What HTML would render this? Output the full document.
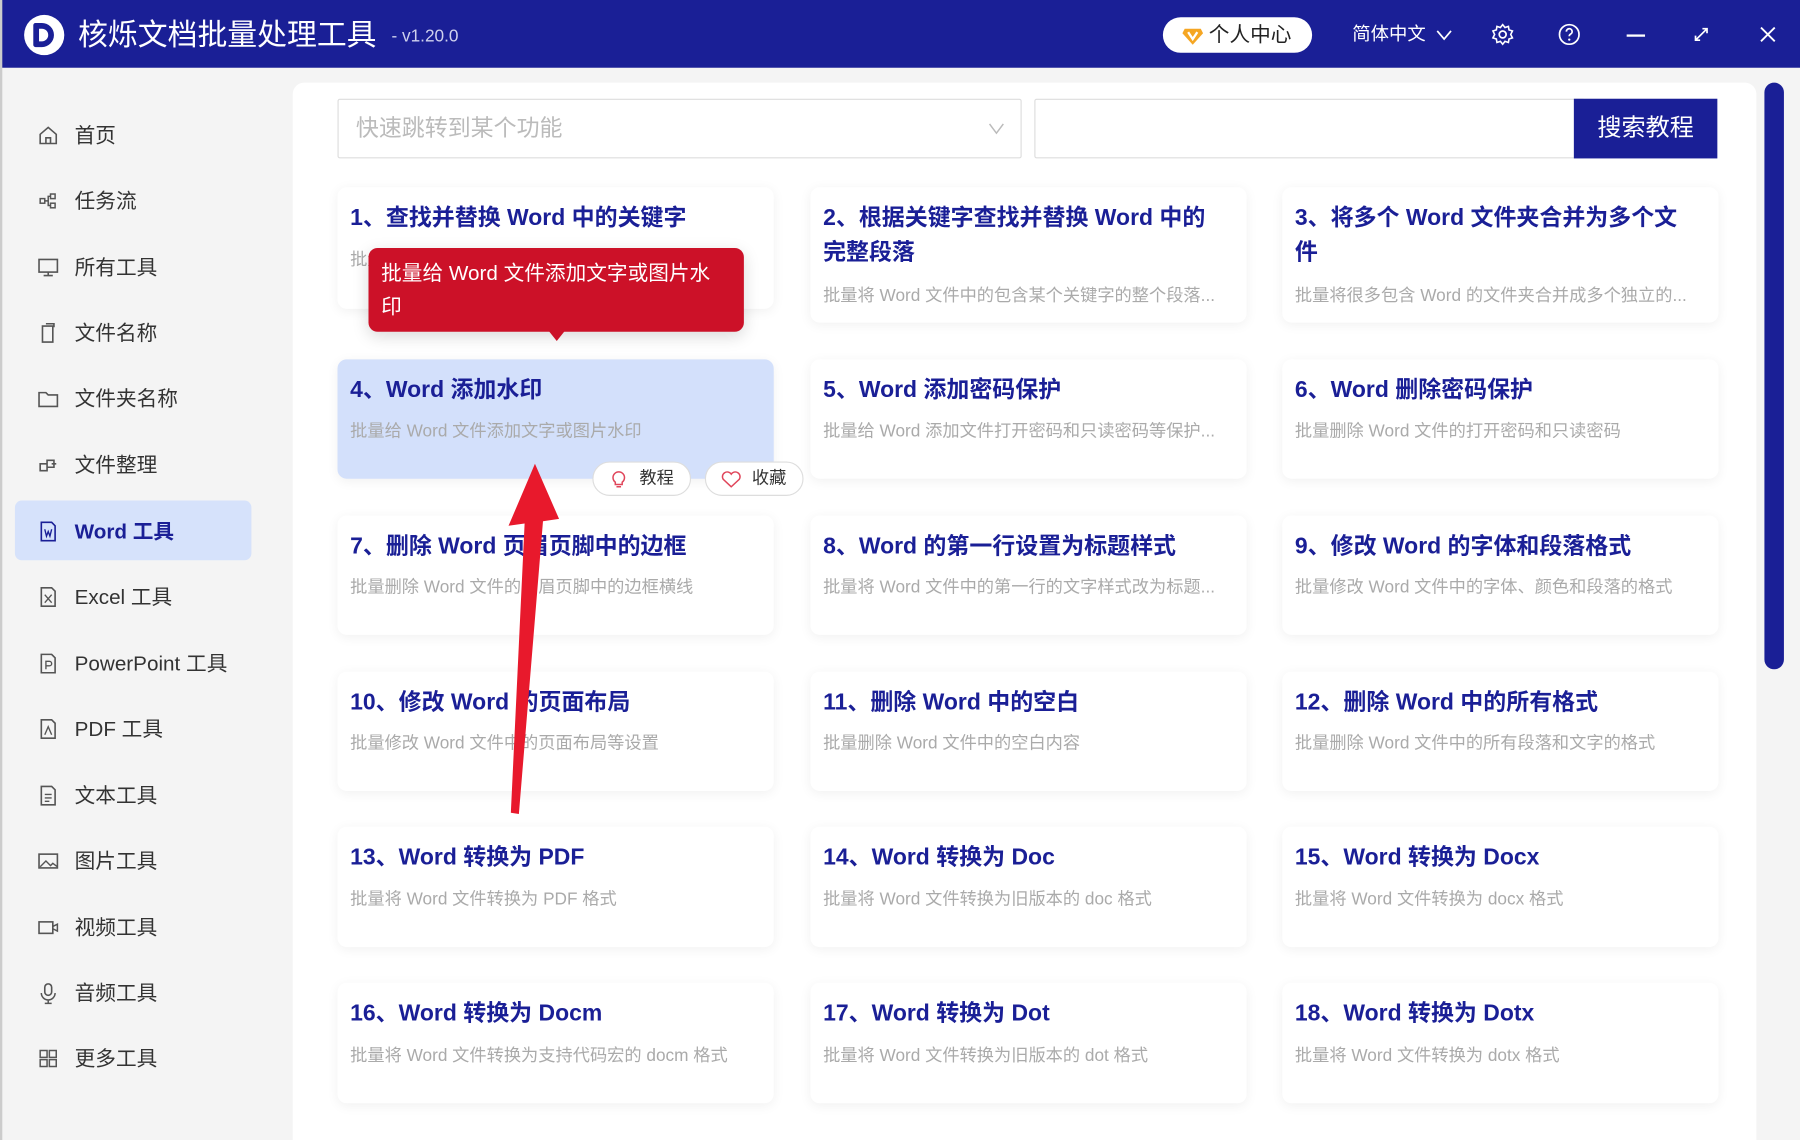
<!DOCTYPE html>
<html><head><meta charset="utf-8">
<style>
*{margin:0;padding:0;box-sizing:border-box}
html,body{width:1800px;height:1140px;overflow:hidden;background:#f4f4f4}
#w{position:absolute;left:0;top:0;width:1568px;height:993px;transform:scale(1.14796,1.14804);transform-origin:0 0;font-family:"Liberation Sans","Noto Sans CJK SC",sans-serif;background:#f4f4f4}
.a{position:absolute;white-space:nowrap}
#hd{left:0;top:0;width:1568px;height:59px;background:#1a1f96}
.si{position:absolute;left:32px;width:20px;height:20px}
.st{position:absolute;left:65px;font-size:18px;color:#333;line-height:24px}
.card{position:absolute;width:380px;background:#fff;border-radius:8px;box-shadow:0 2px 10px rgba(0,0,0,.06)}
.ct{position:absolute;left:11px;top:12px;width:345px;font-size:20px;font-weight:bold;color:#1a1f96;line-height:30px;white-space:normal}
.cd{position:absolute;left:11px;font-size:15px;color:#aaa;white-space:nowrap;line-height:20px}
</style></head><body>
<div id="w">
<div class="a" id="hd"></div>
<div class="a" style="left:0;top:0;width:2px;height:993px;background:#ccc"></div>
<div class="a" style="left:21px;top:13px;width:35px;height:35px;border-radius:50%;background:#fff"></div>
<div class="a" style="left:29px;top:20px;width:18px;height:21px;border:5px solid #1a1f96;border-radius:2px 11px 11px 2px"></div>
<div class="a" style="left:68px;top:13px;font-size:26px;color:#fff;line-height:34px">核烁文档批量处理工具</div>
<div class="a" style="left:341px;top:22px;font-size:15px;color:#cfd1ee;line-height:20px">- v1.20.0</div>
<div class="a" style="left:1013px;top:15px;width:130px;height:31px;border-radius:16px;background:#fff"></div>
<svg class="a" style="left:1029px;top:21px" width="20" height="20" viewBox="0 0 20 20"><path d="M3 4h14l2 4-9 10-9-10z" fill="#f5a623"/><path d="M6 7l4 6 4-6" stroke="#fff" stroke-width="2" fill="none"/></svg>
<div class="a" style="left:1053px;top:18px;font-size:18px;color:#222;line-height:24px">个人中心</div>
<div class="a" style="left:1178px;top:20px;font-size:16px;color:#fff;line-height:22px">简体中文</div>
<svg class="a" style="left:1251px;top:24px" width="14" height="14"><path d="M1 3l6 7 6-7" stroke="#fff" stroke-width="1.5" fill="none"/></svg>
<svg class="a" style="left:1299px;top:20px" width="20" height="20" viewBox="0 0 20 20"><circle cx="10" cy="10" r="3" stroke="#fff" stroke-width="1.5" fill="none"/><path d="M10 1.5l2 2.5 3-1 .5 3 3 1-1.5 3 1.5 3-3 1-.5 3-3-1-2 2.5-2-2.5-3 1-.5-3-3-1 1.5-3-1.5-3 3-1 .5-3 3 1z" stroke="#fff" stroke-width="1.4" fill="none"/></svg>
<svg class="a" style="left:1357px;top:20px" width="20" height="20" viewBox="0 0 20 20"><circle cx="10" cy="10" r="8.5" stroke="#fff" stroke-width="1.5" fill="none"/><path d="M7.5 7.5a2.5 2.5 0 1 1 3.5 2.3c-.8.4-1 1-1 1.8" stroke="#fff" stroke-width="1.5" fill="none"/><circle cx="10" cy="14.5" r="1" fill="#fff"/></svg>
<div class="a" style="left:1417px;top:30px;width:16px;height:2px;background:#fff"></div>
<svg class="a" style="left:1474px;top:22px" width="16" height="16"><path d="M3 13L13 3M9 3h4v4M3 9v4h4" stroke="#fff" stroke-width="1.5" fill="none"/></svg>
<svg class="a" style="left:1532px;top:22px" width="16" height="16"><path d="M2 2l12 12M14 2L2 14" stroke="#fff" stroke-width="1.6"/></svg>

<div class="a" style="left:13px;top:436px;width:206px;height:52px;border-radius:6px;background:#d6e2fb"></div>
<div class="a" style="left:0;top:0">
<svg class="si" style="top:108px" viewBox="0 0 20 20"><path d="M3 9l7-6 7 6v8H3zM8 17v-5h4v5" stroke="#555" stroke-width="1.4" fill="none"/></svg><div class="st" style="top:106px">首页</div>
<svg class="si" style="top:165px" viewBox="0 0 20 20"><rect x="3" y="8" width="4" height="4" stroke="#555" fill="none" stroke-width="1.3"/><rect x="12" y="4" width="4" height="4" stroke="#555" fill="none" stroke-width="1.3"/><rect x="12" y="12" width="4" height="4" stroke="#555" fill="none" stroke-width="1.3"/><path d="M7 10h3V6h2M10 10v4h2" stroke="#555" fill="none" stroke-width="1.3"/></svg><div class="st" style="top:163px">任务流</div>
<svg class="si" style="top:223px" viewBox="0 0 20 20"><rect x="2" y="3" width="16" height="11" stroke="#555" fill="none" stroke-width="1.4"/><path d="M10 14v3M6 17h8" stroke="#555" stroke-width="1.4"/></svg><div class="st" style="top:221px">所有工具</div>
<svg class="si" style="top:280px" viewBox="0 0 20 20"><path d="M5 4h9v14H5zM8 2h7v3" stroke="#555" fill="none" stroke-width="1.4"/></svg><div class="st" style="top:278px">文件名称</div>
<svg class="si" style="top:337px" viewBox="0 0 20 20"><path d="M2 5h6l2 2h8v10H2z" stroke="#555" fill="none" stroke-width="1.4"/></svg><div class="st" style="top:335px">文件夹名称</div>
<svg class="si" style="top:395px" viewBox="0 0 20 20"><path d="M3 9h6v6H3zM9 6h6v6H9zM13 9h4" stroke="#555" fill="none" stroke-width="1.4"/></svg><div class="st" style="top:393px">文件整理</div>
<svg class="si" style="top:453px" viewBox="0 0 20 20"><path d="M4 2h9l3 3v13H4z" stroke="#1a1f96" fill="none" stroke-width="1.4"/><path d="M7 8l1.5 6 1.5-4 1.5 4L13 8" stroke="#1a1f96" fill="none" stroke-width="1.2"/></svg><div class="st" style="top:451px;color:#1a1f96;font-weight:bold">Word 工具</div>
<svg class="si" style="top:510px" viewBox="0 0 20 20"><path d="M4 2h9l3 3v13H4z" stroke="#555" fill="none" stroke-width="1.4"/><path d="M7 8l6 7M13 8l-6 7" stroke="#555" stroke-width="1.2"/></svg><div class="st" style="top:508px">Excel 工具</div>
<svg class="si" style="top:568px" viewBox="0 0 20 20"><path d="M4 2h9l3 3v13H4z" stroke="#555" fill="none" stroke-width="1.4"/><path d="M8 15V8h3a2 2 0 0 1 0 4H8" stroke="#555" fill="none" stroke-width="1.2"/></svg><div class="st" style="top:566px">PowerPoint 工具</div>
<svg class="si" style="top:625px" viewBox="0 0 20 20"><path d="M4 2h9l3 3v13H4z" stroke="#555" fill="none" stroke-width="1.4"/><path d="M7 15l3-7 3 7" stroke="#555" fill="none" stroke-width="1.2"/></svg><div class="st" style="top:623px">PDF 工具</div>
<svg class="si" style="top:683px" viewBox="0 0 20 20"><path d="M4 2h9l3 3v13H4z" stroke="#555" fill="none" stroke-width="1.4"/><path d="M7 9h6M7 12h6M7 15h4" stroke="#555" stroke-width="1.2"/></svg><div class="st" style="top:681px">文本工具</div>
<svg class="si" style="top:740px" viewBox="0 0 20 20"><rect x="2" y="4" width="16" height="12" stroke="#555" fill="none" stroke-width="1.4"/><path d="M3 15l5-5 4 4 2-2 4 3" stroke="#555" fill="none" stroke-width="1.2"/></svg><div class="st" style="top:738px">图片工具</div>
<svg class="si" style="top:798px" viewBox="0 0 20 20"><rect x="2" y="5" width="12" height="10" stroke="#555" fill="none" stroke-width="1.4"/><path d="M14 9l4-2v6l-4-2" stroke="#555" fill="none" stroke-width="1.3"/></svg><div class="st" style="top:796px">视频工具</div>
<svg class="si" style="top:855px" viewBox="0 0 20 20"><rect x="7" y="2" width="6" height="10" rx="3" stroke="#555" fill="none" stroke-width="1.4"/><path d="M4 10a6 6 0 0 0 12 0M10 16v3M7 19h6" stroke="#555" fill="none" stroke-width="1.3"/></svg><div class="st" style="top:853px">音频工具</div>
<svg class="si" style="top:912px" viewBox="0 0 20 20"><path d="M3 3h6v6H3zM11 3h6v6h-6zM3 11h6v6H3zM11 11h6v6h-6z" stroke="#555" fill="none" stroke-width="1.3"/></svg><div class="st" style="top:910px">更多工具</div>
</div>

<div class="a" style="left:255px;top:72px;width:1275px;height:921px;background:#fff;border-radius:10px 10px 0 0"></div>
<div class="a" style="left:1537px;top:72px;width:17px;height:511px;background:#1a1f96;border-radius:9px"></div>
<div class="a" style="left:294px;top:86px;width:596px;height:52px;border:1px solid #ddd;border-radius:2px"></div>
<div class="a" style="left:310px;top:99px;font-size:20px;color:#bbb;line-height:26px">快速跳转到某个功能</div>
<svg class="a" style="left:861px;top:106px" width="14" height="12"><path d="M1 2l6 8 6-8" stroke="#bbb" stroke-width="1.3" fill="none"/></svg>
<div class="a" style="left:901px;top:86px;width:480px;height:52px;border:1px solid #ddd;border-radius:2px"></div>
<div class="a" style="left:1371px;top:86px;width:125px;height:52px;background:#1a1f96;color:#fff;font-size:21px;line-height:52px;text-align:center">搜索教程</div>

<div class="card" style="left:294px;top:163px;height:106px"><div class="ct">1、查找并替换 Word 中的关键字</div><div class="cd" style="top:54px">批量将 Word 文件中的关键字查找并替换</div></div>
<div class="card" style="left:706px;top:163px;height:118px"><div class="ct">2、根据关键字查找并替换 Word 中的<br>完整段落</div><div class="cd" style="top:85px">批量将 Word 文件中的包含某个关键字的整个段落...</div></div>
<div class="card" style="left:1117px;top:163px;height:118px"><div class="ct">3、将多个 Word 文件夹合并为多个文<br>件</div><div class="cd" style="top:85px">批量将很多包含 Word 的文件夹合并成多个独立的...</div></div>

<div class="card" style="left:294px;top:313px;height:104px;background:#d3e0fb"><div class="ct">4、Word 添加水印</div><div class="cd" style="top:53px">批量给 Word 文件添加文字或图片水印</div></div>
<div class="card" style="left:706px;top:313px;height:104px"><div class="ct">5、Word 添加密码保护</div><div class="cd" style="top:53px">批量给 Word 添加文件打开密码和只读密码等保护...</div></div>
<div class="card" style="left:1117px;top:313px;height:104px"><div class="ct">6、Word 删除密码保护</div><div class="cd" style="top:53px">批量删除 Word 文件的打开密码和只读密码</div></div>

<div class="card" style="left:294px;top:449px;height:104px"><div class="ct">7、删除 Word 页眉页脚中的边框</div><div class="cd" style="top:53px">批量删除 Word 文件的页眉页脚中的边框横线</div></div>
<div class="card" style="left:706px;top:449px;height:104px"><div class="ct">8、Word 的第一行设置为标题样式</div><div class="cd" style="top:53px">批量将 Word 文件中的第一行的文字样式改为标题...</div></div>
<div class="card" style="left:1117px;top:449px;height:104px"><div class="ct">9、修改 Word 的字体和段落格式</div><div class="cd" style="top:53px">批量修改 Word 文件中的字体、颜色和段落的格式</div></div>

<div class="card" style="left:294px;top:585px;height:104px"><div class="ct">10、修改 Word 的页面布局</div><div class="cd" style="top:53px">批量修改 Word 文件中的页面布局等设置</div></div>
<div class="card" style="left:706px;top:585px;height:104px"><div class="ct">11、删除 Word 中的空白</div><div class="cd" style="top:53px">批量删除 Word 文件中的空白内容</div></div>
<div class="card" style="left:1117px;top:585px;height:104px"><div class="ct">12、删除 Word 中的所有格式</div><div class="cd" style="top:53px">批量删除 Word 文件中的所有段落和文字的格式</div></div>

<div class="card" style="left:294px;top:720px;height:105px"><div class="ct">13、Word 转换为 PDF</div><div class="cd" style="top:54px">批量将 Word 文件转换为 PDF 格式</div></div>
<div class="card" style="left:706px;top:720px;height:105px"><div class="ct">14、Word 转换为 Doc</div><div class="cd" style="top:54px">批量将 Word 文件转换为旧版本的 doc 格式</div></div>
<div class="card" style="left:1117px;top:720px;height:105px"><div class="ct">15、Word 转换为 Docx</div><div class="cd" style="top:54px">批量将 Word 文件转换为 docx 格式</div></div>

<div class="card" style="left:294px;top:856px;height:105px"><div class="ct">16、Word 转换为 Docm</div><div class="cd" style="top:54px">批量将 Word 文件转换为支持代码宏的 docm 格式</div></div>
<div class="card" style="left:706px;top:856px;height:105px"><div class="ct">17、Word 转换为 Dot</div><div class="cd" style="top:54px">批量将 Word 文件转换为旧版本的 dot 格式</div></div>
<div class="card" style="left:1117px;top:856px;height:105px"><div class="ct">18、Word 转换为 Dotx</div><div class="cd" style="top:54px">批量将 Word 文件转换为 dotx 格式</div></div>

<div class="a" style="left:516px;top:402px;width:86px;height:30px;border:1px solid #ddd;border-radius:15px;background:#fff"></div>
<svg class="a" style="left:531px;top:409px" width="16" height="17" viewBox="0 0 16 17"><path d="M5 11a5 5 0 1 1 6 0v2H5z" stroke="#e0455a" fill="none" stroke-width="1.3"/><path d="M6 15h4" stroke="#e0455a" stroke-width="1.3"/></svg>
<div class="a" style="left:557px;top:407px;font-size:15px;color:#333;line-height:20px">教程</div>
<div class="a" style="left:614px;top:402px;width:86px;height:30px;border:1px solid #ddd;border-radius:15px;background:#fff"></div>
<svg class="a" style="left:628px;top:410px" width="18" height="15" viewBox="0 0 18 15"><path d="M9 14L2 7.5A3.6 3.6 0 0 1 9 3a3.6 3.6 0 0 1 7 4.5z" stroke="#e0455a" fill="none" stroke-width="1.3"/></svg>
<div class="a" style="left:655px;top:407px;font-size:15px;color:#333;line-height:20px">收藏</div>

<div class="a" style="left:321px;top:216px;width:327px;height:73px;background:#cc1128;border-radius:8px;box-shadow:0 4px 14px rgba(0,0,0,.15)"></div>
<div class="a" style="left:477px;top:287px;width:0;height:0;border-left:8px solid transparent;border-right:8px solid transparent;border-top:10px solid #cc1128"></div>
<div class="a" style="left:332px;top:224px;font-size:18px;color:#fff;line-height:29px">批量给 Word 文件添加文字或图片水<br>印</div>

<svg class="a" style="left:0;top:0" width="1568" height="993"><path d="M445 708L457 456 443 458 466 404 487 452 473 454 452 709z" fill="#e8192c"/></svg>
</div>
</body></html>
